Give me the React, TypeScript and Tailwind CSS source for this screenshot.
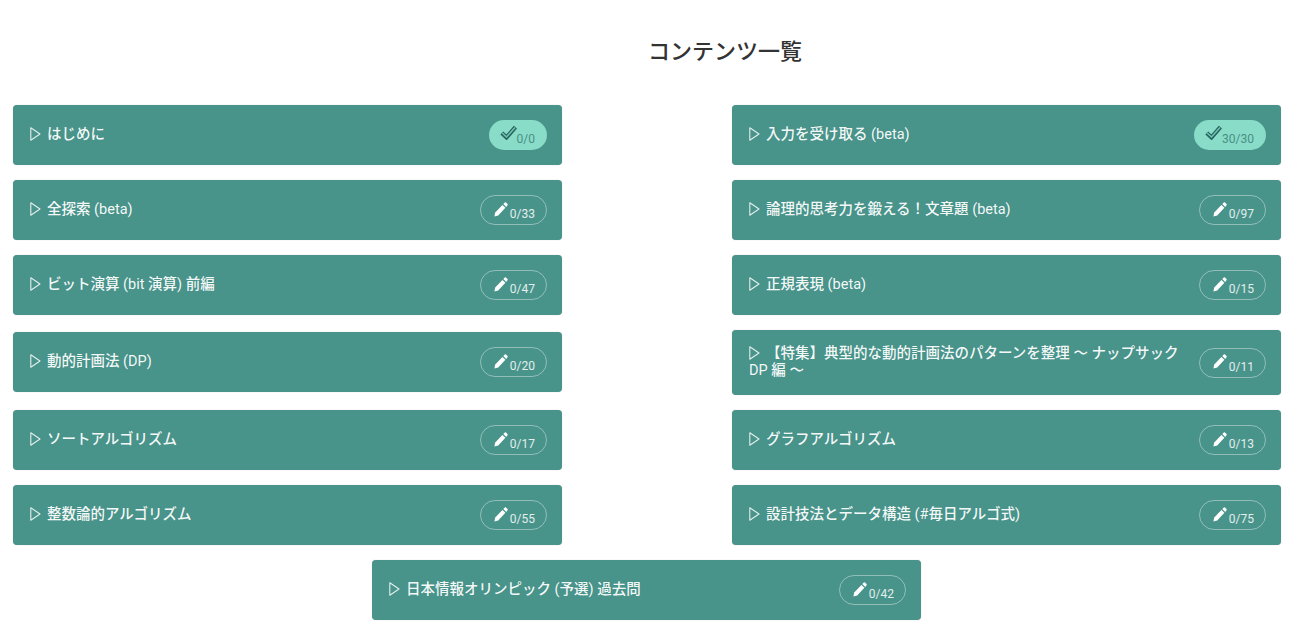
import React from "react";

const FONT = "font-['Roboto','Noto_Sans_CJK_JP',sans-serif]";

type Item = { title: string; score: string; done?: boolean; tall?: boolean; nudge?: boolean; shift?: boolean };

const items: Item[] = [
  { title: "はじめに", score: "0/0", done: true },
  { title: "入力を受け取る (beta)", score: "30/30", done: true },
  { title: "全探索 (beta)", score: "0/33" },
  { title: "論理的思考力を鍛える！文章題 (beta)", score: "0/97" },
  { title: "ビット演算 (bit 演算) 前編", score: "0/47" },
  { title: "正規表現 (beta)", score: "0/15" },
  { title: "動的計画法 (DP)", score: "0/20", nudge: true },
  { title: "【特集】典型的な動的計画法のパターンを整理 〜 ナップサック DP 編 〜", score: "0/11", tall: true },
  { title: "ソートアルゴリズム", score: "0/17" },
  { title: "グラフアルゴリズム", score: "0/13" },
  { title: "整数論的アルゴリズム", score: "0/55" },
  { title: "設計技法とデータ構造 (#毎日アルゴ式)", score: "0/75" },
  { title: "日本情報オリンピック (予選) 過去問", score: "0/42", shift: true },
];

function Triangle() {
  return (
    <svg viewBox="0 0 11 14" className="mr-[6px] inline-block h-[14px] w-[11px] align-[-2px]" fill="none">
      <path d="M0.8 0.8 L10 7 L0.8 13.2 Z" stroke="#ffffff" strokeOpacity="0.85" strokeWidth="1.1" strokeLinejoin="round" />
    </svg>
  );
}

function Pencil() {
  return (
    <svg viewBox="0 0 14 15" className="mb-[2px] h-[15px] w-[14px] shrink-0" fill="#ffffff">
      <path d="M0.4 14.6 L1.2 10.6 L8.4 3 L11.4 5.8 L4.2 13.4 Z" />
      <path d="M9.3 2 L10.8 0.5 Q11.4 0 12 0.5 L13.5 2 Q14 2.6 13.5 3.2 L12.2 4.9 Z" />
    </svg>
  );
}

function DoubleCheck() {
  return (
    <svg viewBox="0 0 17 15" className="mb-[5px] h-[15px] w-[17px] shrink-0" fill="none">
      <path d="M1.8 8 L6.5 12.4 L15.4 2.2" stroke="#256460" strokeWidth="4.2" strokeLinejoin="miter" />
      <path d="M2.2 8 L6.5 12 L15 2.6" stroke="#73c4b2" strokeWidth="1.5" />
    </svg>
  );
}

function Title({ text }: { text: string }) {
  return (
    <>
      {text.split(/([\x20-\x7e]+)/).map((part, i) =>
        /^[\x20-\x7e]+$/.test(part) ? (
          <span key={i} className="font-normal">
            {part}
          </span>
        ) : (
          <span key={i}>{part}</span>
        ),
      )}
    </>
  );
}

function Card({ title, score, done, tall, nudge, shift }: Item) {
  return (
    <div
      className={`w-[549px] ${tall ? "h-[65px]" : "h-[60px]"} ${nudge ? "mb-px" : ""} ${shift ? "mr-px" : ""} flex items-center justify-between rounded-[4px] bg-[#48938a] pr-[15px] pl-[17px] shadow-[0_0_1px_rgba(0,0,0,0.3)]`}
    >
      <div className="mb-[1px] w-[440px] text-[14.5px] leading-[17px] font-medium text-white/95">
        <Triangle />
        <Title text={title} />
      </div>
      {done ? (
        <div className="flex h-[30px] items-center rounded-full bg-[#89dcc7] pr-[12px] pl-[11px] text-[12px] text-[#4a8f86]">
          <DoubleCheck />
          <span className="mt-[8px]">{score}</span>
        </div>
      ) : (
        <div className="flex h-[30px] items-center gap-[2px] rounded-full border border-white/40 pr-[11px] pl-[13px] text-[12px] text-white/85">
          <Pencil />
          <span className="mt-[8px]">{score}</span>
        </div>
      )}
    </div>
  );
}

export default function App() {
  return (
    <div className={`min-h-[640px] bg-white ${FONT}`}>
      <h1 className="pt-[37px] pl-[151px] text-center text-[22px] leading-[30px] font-medium text-[#333]">
        コンテンツ一覧
      </h1>
      <div className="mt-[38px] ml-[13px] flex w-[1268px] flex-wrap items-center justify-center gap-x-[170px] gap-y-[15px]">
        {items.map((it) => (
          <Card key={it.title} {...it} />
        ))}
      </div>
    </div>
  );
}
